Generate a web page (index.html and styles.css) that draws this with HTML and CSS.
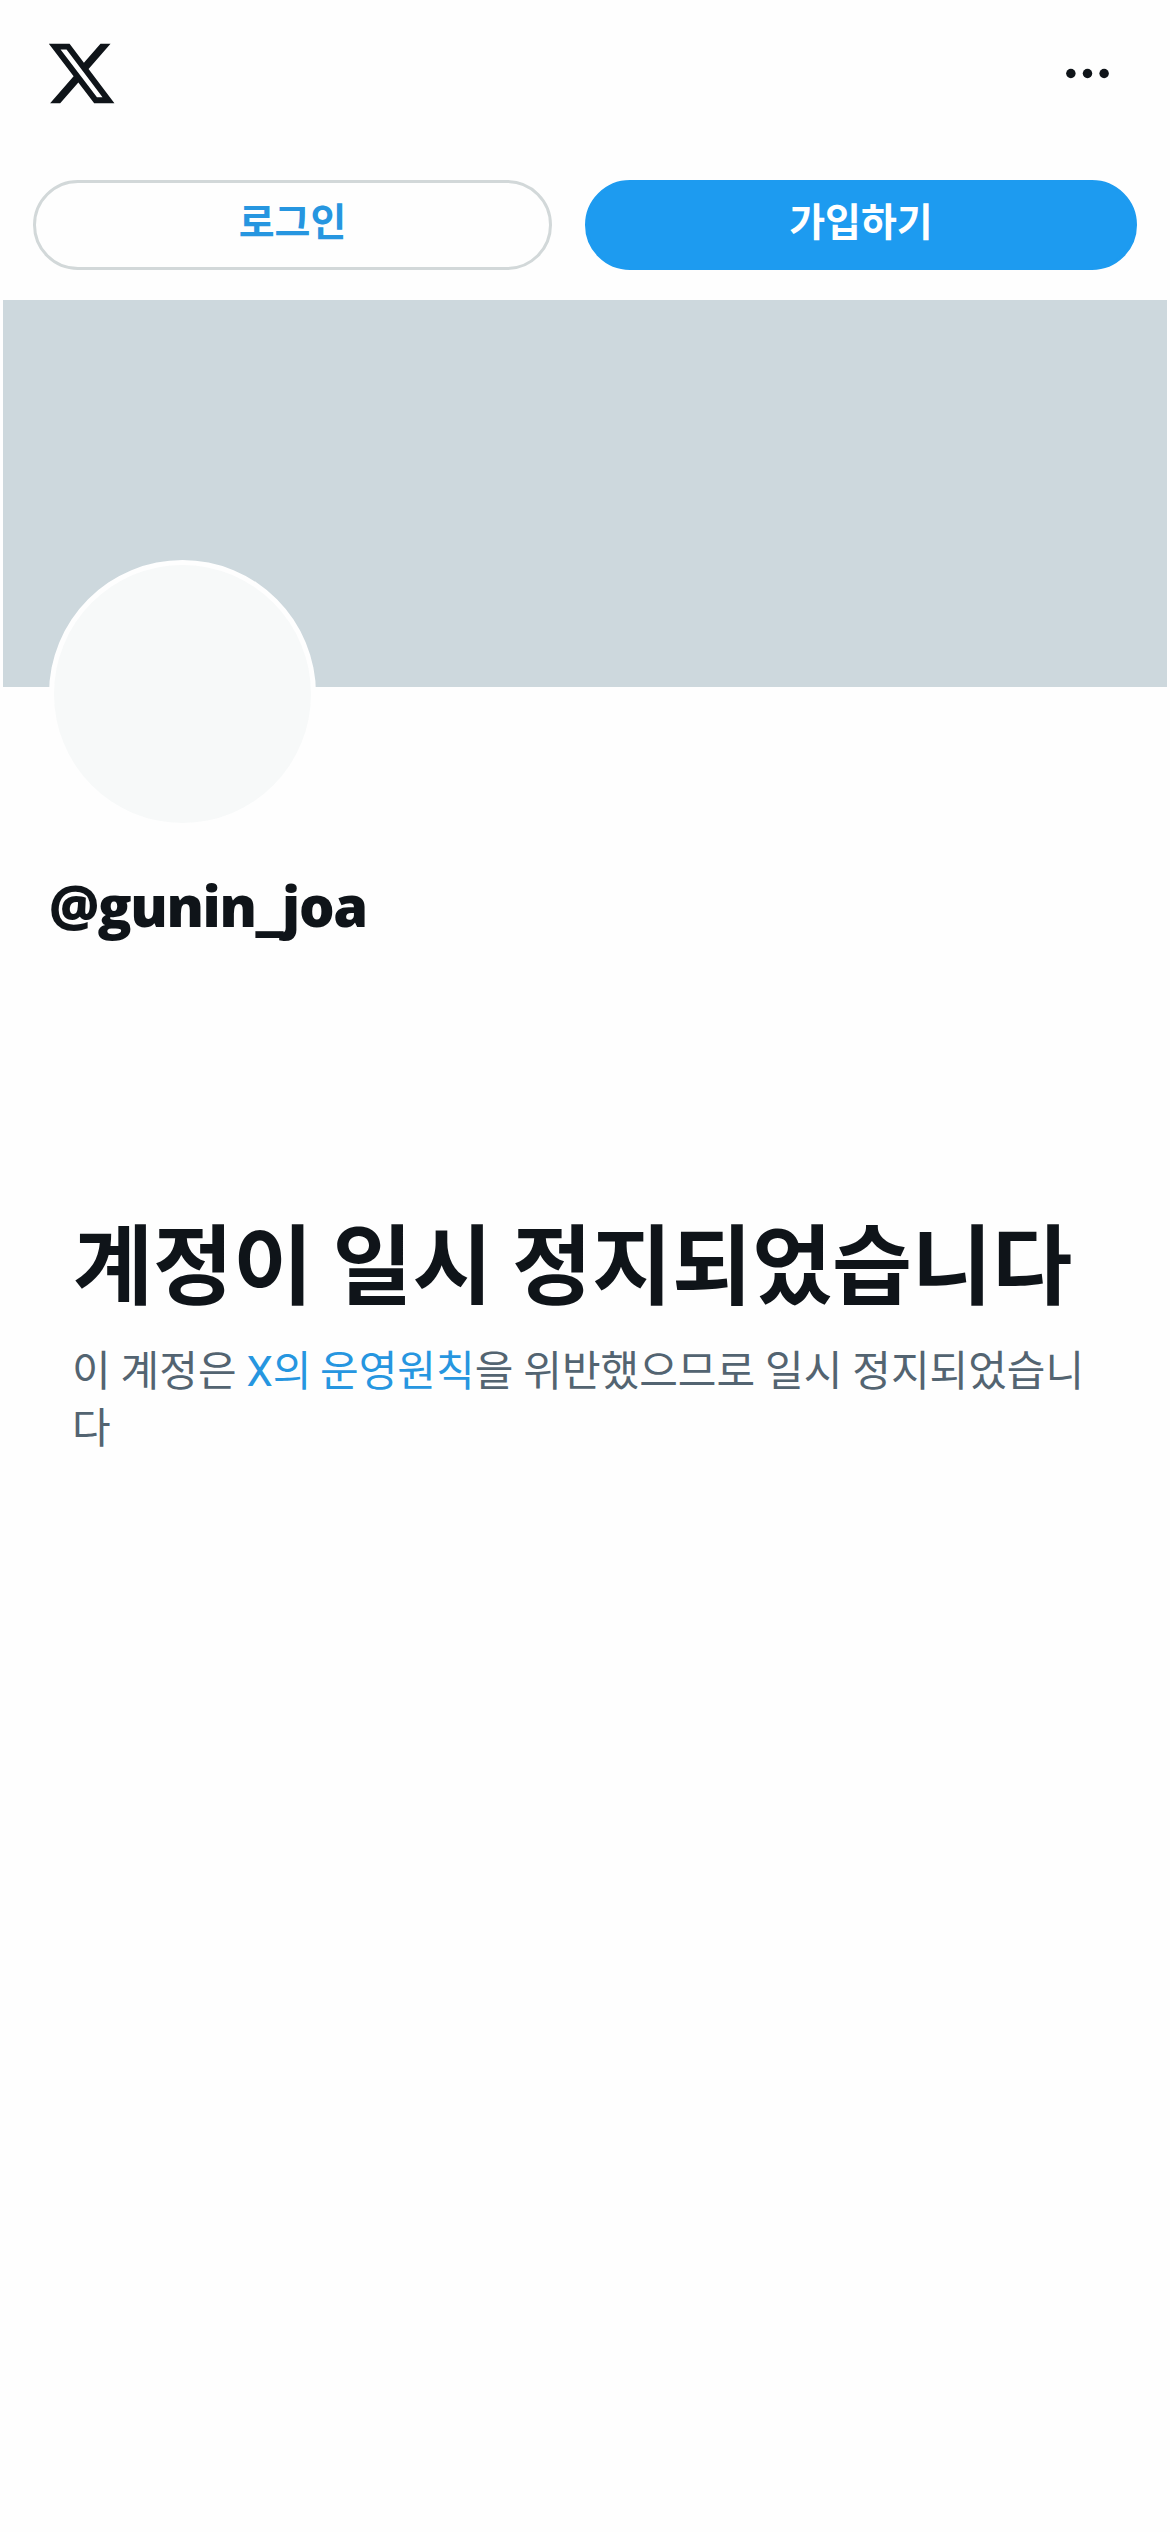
FILE: index.html
```html
<!DOCTYPE html>
<html lang="ko">
<head>
<meta charset="utf-8">
<title>@gunin_joa</title>
<link rel="stylesheet" href="styles.css">
</head>
<body>
<header class="topbar">
  <svg class="logo" viewBox="0 0 24 24" aria-label="X"><path d="M18.244 2.25h3.308l-7.227 8.26 8.502 11.24H16.17l-5.214-6.817L4.99 21.75H1.68l7.73-8.835L1.254 2.25H8.08l4.713 6.231zm-1.161 17.52h1.833L7.084 4.126H5.117z"/></svg>
  <svg class="more" viewBox="0 0 24 24"><circle cx="5" cy="12" r="2"/><circle cx="12" cy="12" r="2"/><circle cx="19" cy="12" r="2"/></svg>
</header>
<nav class="actions">
  <a class="button login">로그인</a>
  <a class="button signup">가입하기</a>
</nav>
<main>
  <div class="banner"></div>
  <section class="profile">
    <div class="avatar"></div>
    <h1 class="handle">@gunin_joa</h1>
  </section>
  <section class="notice">
    <h2 class="notice-title">계정이 일시 정지되었습니다</h2>
    <p class="notice-text">이 계정은 <a class="link">X의 운영원칙</a>을 위반했으므로 일시 정지되었습니다</p>
  </section>
</main>
</body>
</html>
```
FILE: styles.css
```css
* { box-sizing: border-box; }
body {
  margin: 0;
  min-height: 2532px;
  background: #fefefe;
  color: #0f1419;
  font-family: "Noto Sans CJK KR", sans-serif;
}
.topbar {
  display: flex;
  justify-content: space-between;
  align-items: center;
  height: 146px;
  padding: 0 54px 0 45px;
}
.logo { width: 73px; height: 73px; fill: #0f1419; }
.more { width: 57px; height: 57px; fill: #0f1419; }
.actions {
  display: flex;
  gap: 33px;
  height: 154px;
  padding: 34px 33px 30px;
}
.button {
  display: flex;
  justify-content: center;
  height: 90px;
  border: 3px solid #1d9bf0;
  border-radius: 45px;
  font-size: 39px;
  font-weight: 700;
  line-height: 73px;
}
.login { width: 519px; border-color: #d2d8d9; color: #2696e0; }
.signup { width: 552px; background: #1d9bf0; color: #fff; }
.banner { height: 387px; margin: 0 3px; background: #cdd8dd; }
.profile { padding: 0 49px; }
.avatar {
  width: 267px;
  height: 268px;
  margin-top: -127px;
  border: 5px solid #fefefe;
  border-radius: 50%;
  background: #f7f9f9;
}
.handle {
  margin: 38px 0 0;
  font-family: "Open Sans", sans-serif;
  font-size: 56px;
  font-weight: 800;
  letter-spacing: -1.4px;
  line-height: 78px;
}
.notice { padding: 268px 72px 0; }
.notice-title {
  margin: 0 0 0 1px;
  font-size: 87px;
  font-weight: 700;
  line-height: 96px;
  word-spacing: -5px;
  white-space: nowrap;
}
.notice-text {
  margin: 31px 0 0;
  color: #536471;
  font-size: 42px;
  line-height: 57px;
  word-spacing: -1.8px;
  word-break: break-all;
}
.link {
  color: #2696e0;
  font-family: Roboto, "Noto Sans CJK KR", sans-serif;
  line-height: 1;
}
```
